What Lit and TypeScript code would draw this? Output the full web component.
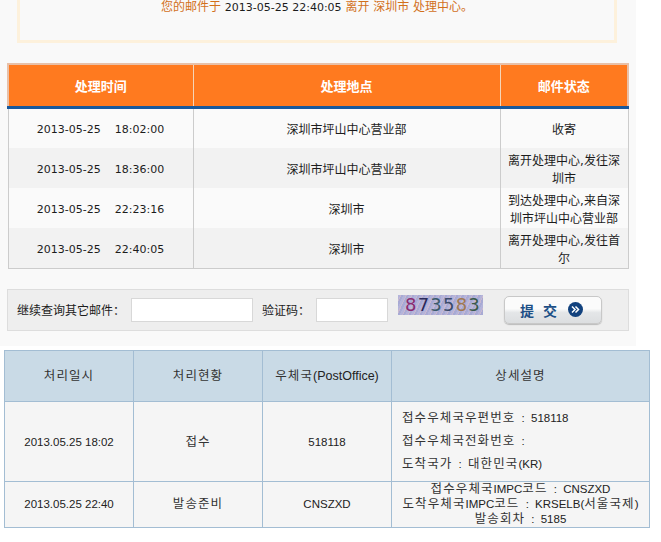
import { LitElement, html, css } from "lit";
import { customElement } from "lit/decorators.js";

const ko = (s: string) =>
  s.split(/([\uAC00-\uD7A3]+)/).map((p, i) => (i % 2 ? html`<span class="k">${p}</span>` : p));

const gap = "\u00a0\u00a0\u00a0\u00a0";
const cnRows = [
  [`2013-05-25${gap}18:02:00`, "深圳市坪山中心营业部", "收寄"],
  [`2013-05-25${gap}18:36:00`, "深圳市坪山中心营业部", "离开处理中心,发往深圳市"],
  [`2013-05-25${gap}22:23:16`, "深圳市", "到达处理中心,来自深圳市坪山中心营业部"],
  [`2013-05-25${gap}22:40:05`, "深圳市", "离开处理中心,发往首尔"],
];

const captcha: [string, string][] = [
  ["8", "#8a2a70"],
  ["7", "#2a2a5a"],
  ["3", "#3a5a6a"],
  ["5", "#3a4a6a"],
  ["8", "#a07850"],
  ["3", "#3a5a4a"],
];

@customElement("app-root")
export class AppRoot extends LitElement {
  static styles = css`
    :host {
      display: block;
      width: 661px;
      height: 542px;
      overflow: hidden;
      background: #fff;
      font-family: "DejaVu Sans", "Noto Sans CJK SC", sans-serif;
      font-size: 11px;
      color: #1c1c1c;
    }
    .wrap {
      width: 636px;
      height: 346px;
      box-sizing: border-box;
      background: #f9f9f9;
      padding-left: 7px;
    }
    .notice {
      box-sizing: border-box;
      width: 600px;
      height: 43px;
      margin-left: 10px;
      border: 3px solid #fdf1dc;
      border-top: 0;
      text-align: center;
      color: #d2701c;
      font-size: 12px;
      line-height: 14px;
    }
    .notice b {
      font-weight: normal;
      font-size: 11px;
      color: #1c1c1c;
    }
    table {
      border-collapse: collapse;
      table-layout: fixed;
    }
    .cn {
      width: 622px;
      margin-top: 20px;
    }
    .cn th {
      height: 41px;
      padding: 0;
      background: #ff7a1f;
      color: #fff;
      font-weight: bold;
      font-size: 13px;
      border-top: 2px solid #e8c0a8;
      border-bottom: 3px solid #17589c;
      border-left: 1px solid #f5d5b8;
      text-align: center;
    }
    .cn th:first-child {
      border-left: 2px solid #e8c0a8;
    }
    .cn th:last-child {
      border-right: 2px solid #e8c0a8;
    }
    .cn td {
      height: 40px;
      box-sizing: border-box;
      padding: 4px 4px 0;
      text-align: center;
      line-height: 18px;
      font-size: 12px;
      border-left: 1px solid #ccc;
      border-right: 1px solid #ccc;
      background: #fafafa;
    }
    .cn td.time {
      font-size: 11px;
    }
    .cn tr:nth-child(even) td {
      background: #f2f2f2;
    }
    .cn tbody tr:last-child td {
      border-bottom: 1px solid #ccc;
    }
    .query {
      box-sizing: border-box;
      width: 622px;
      height: 42px;
      margin-top: 20px;
      border: 1px solid #ddd;
      background: #eee;
      display: flex;
      align-items: center;
      padding-left: 9px;
      font-size: 12px;
    }
    .query input {
      box-sizing: border-box;
      height: 24px;
      border: 1px solid #d8d8d8;
      background: #fff;
      padding: 0;
    }
    .i1 {
      width: 122px;
      margin-left: 6px;
    }
    .i2 {
      width: 72px;
      margin-left: 6px;
    }
    .l2 {
      margin-left: 9px;
    }
    .cap {
      box-sizing: border-box;
      width: 85px;
      height: 20px;
      margin: -10px 0 0 10px;
      background: repeating-linear-gradient(115deg, #b4b4da 0 2px, #c8b8d0 2px 3px, #a8aad4 3px 5px);
      font-size: 18px;
      line-height: 20px;
      letter-spacing: 1.2px;
      padding-left: 7px;
      white-space: nowrap;
    }
    .btn {
      box-sizing: border-box;
      width: 98px;
      height: 28px;
      margin-left: 21px;
      border: 1px solid #c8c8c8;
      border-radius: 5px;
      background: linear-gradient(#fbfbfb 0 45%, #e4e6e8 60%, #dcdee0);
      display: flex;
      align-items: center;
      padding-left: 15px;
      color: #1d4f86;
      font-family: "Noto Sans CJK SC", sans-serif;
      font-weight: bold;
      font-size: 14px;
      box-shadow: 0 1px 1px #bbb;
    }
    .btn span {
      margin-right: 9px;
    }
    .btn svg {
      margin-left: 2px;
    }
    .kr {
      width: 646px;
      margin: 4px 0 0 4px;
      font-family: "Liberation Sans", sans-serif;
      font-size: 11.5px;
      color: #222;
    }
    .k {
      font-family: "Noto Sans CJK KR", sans-serif;
      font-size: 12.5px;
      letter-spacing: 1.1px;
      line-height: 1;
      color: #333;
    }
    .kr th,
    .kr td {
      border: 1px solid #a3bdd3;
      text-align: center;
      padding: 0;
      font-weight: normal;
    }
    .kr th {
      height: 50px;
      background: #c9dae6;
      font-size: 12.5px;
    }
    .kr td {
      background: #f5f5f5;
    }
    .kr .r1 td {
      height: 79px;
    }
    .kr .r2 td {
      height: 45px;
      line-height: 15px;
    }
    .kr td.d {
      word-spacing: 3px;
    }
    .kr .r1 td.d {
      text-align: left;
      padding-left: 10px;
      line-height: 23px;
    }
  `;

  render() {
    return html`
      <div class="wrap">
        <div class="notice">您的邮件于 <b>2013-05-25 22:40:05</b> 离开 深圳市 处理中心。</div>
        <table class="cn">
          <colgroup><col style="width:185px" /><col style="width:307px" /><col /></colgroup>
          <thead><tr><th>处理时间</th><th>处理地点</th><th>邮件状态</th></tr></thead>
          <tbody>
            ${cnRows.map((r) => html`<tr><td class="time">${r[0]}</td><td>${r[1]}</td><td>${r[2]}</td></tr>`)}
          </tbody>
        </table>
        <div class="query">
          <span>继续查询其它邮件：</span>
          <input class="i1" type="text" />
          <span class="l2">验证码：</span>
          <input class="i2" type="text" />
          <div class="cap">${captcha.map((c) => html`<span style="color:${c[1]}">${c[0]}</span>`)}</div>
          <div class="btn">
            <span>提</span><span>交</span>
            <svg width="15" height="15" viewBox="0 0 15 15">
              <circle cx="7.5" cy="7.5" r="7.5" fill="#12427e" />
              <path d="M4 4.5l3 3-3 3M7.5 4.5l3 3-3 3" fill="none" stroke="#fff" stroke-width="1.5" />
            </svg>
          </div>
        </div>
      </div>
      <table class="kr">
        <colgroup><col style="width:129px" /><col style="width:129px" /><col style="width:129px" /><col /></colgroup>
        <thead>
          <tr>
            <th>${ko("처리일시")}</th>
            <th>${ko("처리현황")}</th>
            <th>${ko("우체국(PostOffice)")}</th>
            <th>${ko("상세설명")}</th>
          </tr>
        </thead>
        <tbody>
          <tr class="r1">
            <td>2013.05.25 18:02</td>
            <td>${ko("접수")}</td>
            <td>518118</td>
            <td class="d">
              ${ko("접수우체국우편번호 : 518118")}<br />
              ${ko("접수우체국전화번호 :")}<br />
              ${ko("도착국가 : 대한민국(KR)")}
            </td>
          </tr>
          <tr class="r2">
            <td>2013.05.25 22:40</td>
            <td>${ko("발송준비")}</td>
            <td>CNSZXD</td>
            <td class="d">
              ${ko("접수우체국IMPC코드 : CNSZXD")}<br />
              ${ko("도착우체국IMPC코드 : KRSELB(서울국제)")}<br />
              ${ko("발송회차 : 5185")}
            </td>
          </tr>
        </tbody>
      </table>
    `;
  }
}
